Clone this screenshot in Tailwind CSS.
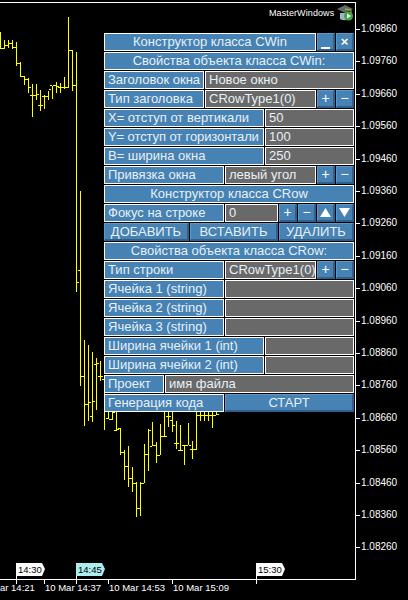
<!DOCTYPE html>
<html lang="ru">
<head>
  <meta charset="UTF-8">
  <title>MasterWindows</title>
  <script src="https://cdn.jsdelivr.net/npm/@tailwindcss/browser@4"></script>
</head>
<body class="bg-black">
  <div class="relative w-[408px] h-[600px] overflow-hidden bg-black text-white font-['Liberation_Sans',sans-serif]">

    <!-- рамка графика -->
    <div class="absolute left-0 top-[2px] w-[356px] h-[578px] border-t border-r border-b border-white"></div>

    <svg id="chart" class="absolute left-0 top-0" width="408" height="600" shape-rendering="crispEdges"></svg>

    <!-- шкала цен -->
    <div id="prices" class="absolute left-[356px] top-0 text-[10px] leading-[10px]"></div>

    <!-- метки времени -->
    <div class="absolute left-[16px] top-[563px] w-[29px] h-[13px] bg-white text-black text-[9.5px] leading-[13px] pl-[2px] [clip-path:polygon(0_0,26px_0,29px_6px,26px_13px,0_13px)]">14:30</div>
    <div class="absolute left-[76px] top-[563px] w-[29px] h-[13px] bg-[#aeeeee] text-black text-[9.5px] leading-[13px] pl-[2px] [clip-path:polygon(0_0,26px_0,29px_6px,26px_13px,0_13px)]">14:45</div>
    <div class="absolute left-[256px] top-[563px] w-[29px] h-[13px] bg-white text-black text-[9.5px] leading-[13px] pl-[2px] [clip-path:polygon(0_0,26px_0,29px_6px,26px_13px,0_13px)]">15:30</div>
    <div id="times" class="absolute left-0 top-[583px] text-[9.5px] leading-[10px]"></div>

    <!-- подпись советника -->
    <div class="absolute left-[269px] top-[8px] text-[9px] leading-[11px] tracking-[0.1px]">MasterWindows</div>
    <svg class="absolute left-[337px] top-[4px]" width="17" height="17" viewBox="0 0 17 17">
      <path d="M3 9 L3 15 Q8 18 13 14 L13 9 Z" fill="#9ab4c4"/>
      <path d="M0 5 L8 1 L16 5 L8 9 Z" fill="#5f6b5f"/>
      <path d="M8 5 L14 6 L14 10" fill="none" stroke="#c9b24a" stroke-width="1"/>
      <circle cx="11.5" cy="12" r="4.5" fill="#3fa93f"/>
      <path d="M10 9.5 L14 12 L10 14.5 Z" fill="#ffffff"/>
    </svg>

    <!-- панель -->
    <div class="absolute left-[104px] top-[33px] w-[250px] flex flex-col gap-px text-[#e8f0f6] text-[13px]">
      <div class="flex gap-px h-[18px]">
        <div class="w-[212px] h-full border border-white bg-[#4682b4] flex items-center justify-center">Конструктор класса CWin</div>
        <div class="w-[18px] h-full bg-[#4682b4] border border-t-[#5f97c6] border-l-[#5f97c6] border-b-2 border-r-2 border-b-[#2f5f8a] border-r-[#2f5f8a] flex items-end justify-center"><span class="w-[9px] h-[2px] bg-white"></span></div>
        <div class="w-[18px] h-full bg-[#4682b4] border border-t-[#5f97c6] border-l-[#5f97c6] border-b-2 border-r-2 border-b-[#2f5f8a] border-r-[#2f5f8a] flex items-center justify-center font-bold text-white">×</div>
      </div>
      <div class="h-[18px] border border-white bg-[#4682b4] flex items-center justify-center">Свойства объекта класса CWin:</div>
      <div class="flex gap-px h-[18px]">
        <div class="w-[100px] h-full border border-white bg-[#4682b4] pl-[3px] leading-[16px]">Заголовок окна</div>
        <div class="flex-1 h-full border border-white bg-[#696969] pl-[3px] leading-[16px]">Новое окно</div>
      </div>
      <div class="flex gap-px h-[18px]">
        <div class="w-[100px] h-full border border-white bg-[#4682b4] pl-[3px] leading-[16px]">Тип заголовка</div>
        <div class="w-[111px] h-full border border-white bg-[#696969] pl-[3px] leading-[16px]">CRowType1(0)</div>
        <div class="w-[18px] h-full bg-[#4682b4] border border-t-[#5f97c6] border-l-[#5f97c6] border-b-2 border-r-2 border-b-[#2f5f8a] border-r-[#2f5f8a] flex items-center justify-center text-white text-[14px]">+</div>
        <div class="w-[18px] h-full bg-[#4682b4] border border-t-[#5f97c6] border-l-[#5f97c6] border-b-2 border-r-2 border-b-[#2f5f8a] border-r-[#2f5f8a] flex items-center justify-center text-white text-[14px]">−</div>
      </div>
      <div class="flex gap-px h-[18px]">
        <div class="w-[160px] h-full border border-white bg-[#4682b4] pl-[3px] leading-[16px]">X= отступ от вертикали</div>
        <div class="flex-1 h-full border border-white bg-[#696969] pl-[3px] leading-[16px]">50</div>
      </div>
      <div class="flex gap-px h-[18px]">
        <div class="w-[160px] h-full border border-white bg-[#4682b4] pl-[3px] leading-[16px] whitespace-nowrap tracking-[-0.1px]">Y= отступ от горизонтали</div>
        <div class="flex-1 h-full border border-white bg-[#696969] pl-[3px] leading-[16px]">100</div>
      </div>
      <div class="flex gap-px h-[18px]">
        <div class="w-[160px] h-full border border-white bg-[#4682b4] pl-[3px] leading-[16px]">B= ширина окна</div>
        <div class="flex-1 h-full border border-white bg-[#696969] pl-[3px] leading-[16px]">250</div>
      </div>
      <div class="flex gap-px h-[18px]">
        <div class="w-[120px] h-full border border-white bg-[#4682b4] pl-[3px] leading-[16px]">Привязка окна</div>
        <div class="w-[91px] h-full border border-white bg-[#696969] pl-[3px] leading-[16px]">левый угол</div>
        <div class="w-[18px] h-full bg-[#4682b4] border border-t-[#5f97c6] border-l-[#5f97c6] border-b-2 border-r-2 border-b-[#2f5f8a] border-r-[#2f5f8a] flex items-center justify-center text-white text-[14px]">+</div>
        <div class="w-[18px] h-full bg-[#4682b4] border border-t-[#5f97c6] border-l-[#5f97c6] border-b-2 border-r-2 border-b-[#2f5f8a] border-r-[#2f5f8a] flex items-center justify-center text-white text-[14px]">−</div>
      </div>
      <div class="h-[18px] border border-white bg-[#4682b4] flex items-center justify-center">Конструктор класса CRow</div>
      <div class="flex gap-px h-[18px]">
        <div class="w-[120px] h-full border border-white bg-[#4682b4] pl-[3px] leading-[16px]">Фокус на строке</div>
        <div class="w-[53px] h-full border border-white bg-[#696969] pl-[3px] leading-[16px]">0</div>
        <div class="w-[18px] h-full bg-[#4682b4] border border-t-[#5f97c6] border-l-[#5f97c6] border-b-2 border-r-2 border-b-[#2f5f8a] border-r-[#2f5f8a] flex items-center justify-center text-white text-[14px]">+</div>
        <div class="w-[18px] h-full bg-[#4682b4] border border-t-[#5f97c6] border-l-[#5f97c6] border-b-2 border-r-2 border-b-[#2f5f8a] border-r-[#2f5f8a] flex items-center justify-center text-white text-[14px]">−</div>
        <div class="w-[18px] h-full bg-[#4682b4] border border-t-[#5f97c6] border-l-[#5f97c6] border-b-2 border-r-2 border-b-[#2f5f8a] border-r-[#2f5f8a] flex items-center justify-center">
          <svg width="11" height="9" viewBox="0 0 11 9"><path d="M5.5 0 L11 9 L0 9 Z" fill="#ffffff"/></svg>
        </div>
        <div class="w-[18px] h-full bg-[#4682b4] border border-t-[#5f97c6] border-l-[#5f97c6] border-b-2 border-r-2 border-b-[#2f5f8a] border-r-[#2f5f8a] flex items-center justify-center">
          <svg width="11" height="9" viewBox="0 0 11 9"><path d="M0 0 L11 0 L5.5 9 Z" fill="#ffffff"/></svg>
        </div>
      </div>
      <div class="flex gap-px h-[18px]">
        <div class="w-[85px] h-full bg-[#4682b4] border border-t-[#5f97c6] border-l-[#5f97c6] border-b-2 border-r-2 border-b-[#2f5f8a] border-r-[#2f5f8a] flex items-center justify-center">ДОБАВИТЬ</div>
        <div class="w-[88px] h-full bg-[#4682b4] border border-t-[#5f97c6] border-l-[#5f97c6] border-b-2 border-r-2 border-b-[#2f5f8a] border-r-[#2f5f8a] flex items-center justify-center">ВСТАВИТЬ</div>
        <div class="flex-1 h-full bg-[#4682b4] border border-t-[#5f97c6] border-l-[#5f97c6] border-b-2 border-r-2 border-b-[#2f5f8a] border-r-[#2f5f8a] flex items-center justify-center">УДАЛИТЬ</div>
      </div>
      <div class="h-[18px] border border-white bg-[#4682b4] flex items-center justify-center">Свойства объекта класса CRow:</div>
      <div class="flex gap-px h-[18px]">
        <div class="w-[120px] h-full border border-white bg-[#4682b4] pl-[3px] leading-[16px]">Тип строки</div>
        <div class="w-[91px] h-full border border-white bg-[#696969] pl-[3px] leading-[16px] whitespace-nowrap">CRowType1(0)</div>
        <div class="w-[18px] h-full bg-[#4682b4] border border-t-[#5f97c6] border-l-[#5f97c6] border-b-2 border-r-2 border-b-[#2f5f8a] border-r-[#2f5f8a] flex items-center justify-center text-white text-[14px]">+</div>
        <div class="w-[18px] h-full bg-[#4682b4] border border-t-[#5f97c6] border-l-[#5f97c6] border-b-2 border-r-2 border-b-[#2f5f8a] border-r-[#2f5f8a] flex items-center justify-center text-white text-[14px]">−</div>
      </div>
      <div class="flex gap-px h-[18px]">
        <div class="w-[120px] h-full border border-white bg-[#4682b4] pl-[3px] leading-[16px]">Ячейка 1 (string)</div>
        <div class="flex-1 h-full border border-white bg-[#696969]"></div>
      </div>
      <div class="flex gap-px h-[18px]">
        <div class="w-[120px] h-full border border-white bg-[#4682b4] pl-[3px] leading-[16px]">Ячейка 2 (string)</div>
        <div class="flex-1 h-full border border-white bg-[#696969]"></div>
      </div>
      <div class="flex gap-px h-[18px]">
        <div class="w-[120px] h-full border border-white bg-[#4682b4] pl-[3px] leading-[16px]">Ячейка 3 (string)</div>
        <div class="flex-1 h-full border border-white bg-[#696969]"></div>
      </div>
      <div class="flex gap-px h-[18px]">
        <div class="w-[160px] h-full border border-white bg-[#4682b4] pl-[3px] leading-[16px]">Ширина ячейки 1 (int)</div>
        <div class="flex-1 h-full border border-white bg-[#696969]"></div>
      </div>
      <div class="flex gap-px h-[18px]">
        <div class="w-[160px] h-full border border-white bg-[#4682b4] pl-[3px] leading-[16px]">Ширина ячейки 2 (int)</div>
        <div class="flex-1 h-full border border-white bg-[#696969]"></div>
      </div>
      <div class="flex gap-px h-[18px]">
        <div class="w-[60px] h-full border border-white bg-[#4682b4] pl-[3px] leading-[16px]">Проект</div>
        <div class="flex-1 h-full border border-white bg-[#696969] pl-[3px] leading-[16px]">имя файла</div>
      </div>
      <div class="flex gap-px h-[18px]">
        <div class="w-[120px] h-full border border-white bg-[#4682b4] pl-[3px] leading-[16px]">Генерация кода</div>
        <div class="flex-1 h-full bg-[#4682b4] border border-t-[#5f97c6] border-l-[#5f97c6] border-b-2 border-r-2 border-b-[#2f5f8a] border-r-[#2f5f8a] flex items-center justify-center">СТАРТ</div>
      </div>
    </div>
  </div>

  <script>
    // бары: x, high, low, open, close
    const bars = [
      [0,32,49,48,48],[4,40,49,48,45],[8,40,48,45,43],[12,40,49,43,47],[16,42,66,47,63],
      [20,62,77,63,76],[24,76,85,76,79],[28,78,93,79,87],[32,84,117,95,95],[36,84,100,95,94],
      [40,90,111,105,105],[44,95,109,96,96],[48,91,100,96,89],[52,86,99,85,85],[56,82,93,85,86],
      [60,83,93,87,87],[64,77,89,87,87],[68,17,88,87,50],[72,50,91,50,85],[76,52,292,85,282],
      [80,191,386,270,376],[84,340,426,376,404],[88,345,421,404,402],[92,352,422,416,401],
      [96,358,410,364,363],[100,361,381,376,376],[104,378,430,379,400],[108,400,419,418,419],
      [112,405,420,419,412],[116,405,431,430,429],[120,428,455,428,452],[124,450,480,452,466],
      [128,446,487,466,478],[132,467,492,478,483],[136,482,517,483,508],[140,482,516,508,483],
      [144,444,483,483,454],[148,429,471,454,430],[152,422,446,446,445],[156,442,463,445,455],
      [160,424,455,455,436],[164,405,437,436,436],[168,405,427,416,416],[172,405,432,420,425],
      [176,421,449,443,443],[180,425,451,450,450],[184,445,465,445,445],[188,423,445,445,445],
      [192,441,459,449,449],[196,405,450,449,415],[200,405,421,415,415],[204,405,421,415,415],
      [208,405,421,415,415],[212,405,428,415,415],[216,405,415,415,414],
    ];
    let svg = "";
    const line = (x1, y1, x2, y2, c) => `<line x1="${x1}" y1="${y1}" x2="${x2}" y2="${y2}" stroke="${c}" stroke-width="1"/>`;
    bars.forEach(([x, h, l, o, c]) => {
      svg += line(x + 0.5, h, x + 0.5, l, "#ffff00");
      svg += line(x - 2, o + 0.5, x, o + 0.5, "#ffff00");
      svg += line(x + 1, c + 0.5, x + 3, c + 0.5, "#ffff00");
    });

    // риски шкалы цен
    let priceHtml = "";
    for (let i = 0; i < 17; i++) {
      const y = Math.round(29 + i * 32.4);
      svg += line(356, y + 0.5, 360, y + 0.5, "#ffffff");
      const label = (1.0986 - i * 0.001).toFixed(5);
      priceHtml += `<div class="absolute left-[5px] whitespace-nowrap" style="top:${y - 5}px">${label}</div>`;
    }
    document.getElementById("prices").innerHTML = priceHtml;

    // риски шкалы времени
    const times = [[-1, "ar 14:21"], [44, "10 Mar 14:37"], [108, "10 Mar 14:53"], [172, "10 Mar 15:09"]];
    let timeHtml = "";
    times.forEach(([x, t], i) => {
      if (i > 0) svg += line(x + 0.5, 580, x + 0.5, 584, "#ffffff");
      timeHtml += `<div class="absolute whitespace-nowrap" style="left:${x + 1}px">${t}</div>`;
    });
    document.getElementById("times").innerHTML = timeHtml;
    [16, 76, 256].forEach((x) => { svg += line(x + 0.5, 563, x + 0.5, 584, "#ffffff"); });
    document.getElementById("chart").innerHTML = svg;
  </script>
</body>
</html>
